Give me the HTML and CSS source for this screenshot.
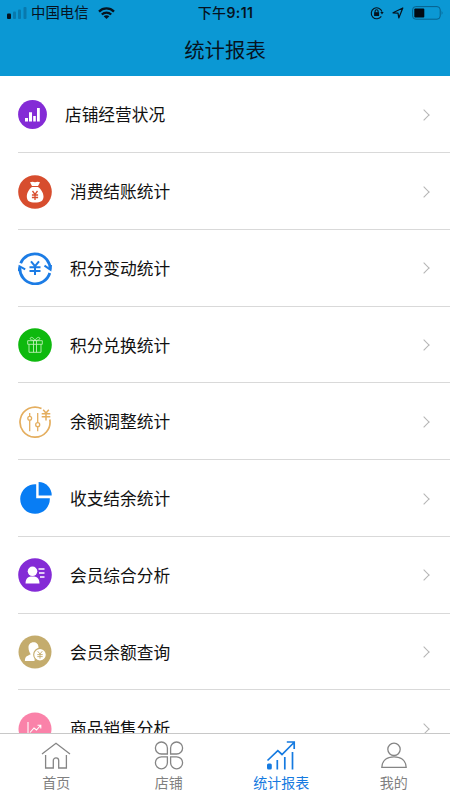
FILE: index.html
```html
<!DOCTYPE html>
<html lang="zh-CN">
<head>
  <meta charset="UTF-8" />
  <meta name="viewport" content="width=device-width, initial-scale=1.0" />
  <title>统计报表</title>
  <link rel="stylesheet" href="styles.css">
</head>
<body>

  <header class="header">
    <div class="status-bar">
      <div class="status-left">
        <svg class="signal" width="20" height="12" viewBox="0 0 20 12">
          <rect x="0" y="6.500" width="4" height="5.500" rx="1" fill="#06131f"/>
          <g fill="#0879ad">
            <rect x="6" y="4.500" width="3" height="7.500" rx="1"/>
            <rect x="11" y="2.500" width="3" height="9.500" rx="1"/>
            <rect x="16.500" y="0" width="3" height="12" rx="1"/>
          </g>
        </svg>
        <span class="carrier">中国电信</span>
        <svg class="wifi" width="17" height="12" viewBox="0 0 17 12" fill="none" stroke="#06131f" stroke-width="2.3">
          <path d="M1 4.600C5.200.4 11.800.4 16 4.600"/>
          <path d="M3.800 7.500C6.500 4.900 10.500 4.900 13.200 7.500"/>
          <path d="M8.500 12L5.700 9.200C7.300 7.900 9.700 7.900 11.300 9.200Z" fill="#06131f" stroke="none"/>
        </svg>
      </div>
      <div class="status-time">下午<b>9:11</b></div>
      <div class="status-right">
        <svg width="14" height="14" viewBox="0 0 14 14" fill="none" stroke="#06131f" stroke-width="1.100">
          <path d="M11.300 10.400A5.500 5.500 0 1 1 12 5.600"/>
          <path d="M10.300 5.900H13.700L12 8.400Z" fill="#06131f" stroke="none"/>
          <rect x="4.100" y="6.200" width="5" height="3.800" fill="#06131f" stroke="none"/>
          <path d="M5.100 6.500V5.300a1.500 1.500 0 0 1 3 0V6.500"/>
        </svg>
        <svg width="12" height="12" viewBox="0 0 12 12" fill="none" stroke="#06131f" stroke-width="1.200" stroke-linejoin="round">
          <path d="M1 5.800L10.800 1L6.800 11L6 6.200Z"/>
        </svg>
        <svg width="32" height="14" viewBox="0 0 32 14">
          <rect x=".6" y=".6" width="27.600" height="12.600" rx="3.200" fill="none" stroke="#07618d"/>
          <rect x="2.300" y="2.500" width="10" height="9" rx="1" fill="#020a14"/>
          <path d="M29.700 4.800q1.600 2.100 0 4.200Z" fill="#07618d"/>
        </svg>
      </div>
    </div>
    <h1 class="title">统计报表</h1>
  </header>

  <main class="list">
    <div class="row">
      <svg class="icon icon-small" viewBox="0 0 29 29">
        <circle cx="14.500" cy="14.500" r="14.400" fill="#842bd6"/>
        <path d="M7 18h3v3.500H7zM11 12.200h3v9.300h-3zM15.200 16h2.600v5.500h-2.600zM19 8h2.800v13.500H19z" fill="#fff"/>
      </svg>
      <span class="label">店铺经营状况</span>
      <i class="arrow"></i>
    </div>
    <div class="row">
      <svg class="icon" viewBox="0 0 34 34">
        <circle cx="17" cy="17" r="16.800" fill="#d74d2e"/>
        <path d="M12 7.200Q14.500 6.400 17 7.200Q19.500 6.400 22 7.200L20 11H14ZM14 12H20C23 14 25.500 18 25.500 21.500C25.500 26 22.500 27.600 17 27.600S8.800 26 8.800 21.500C8.800 18 11 14 14 12Z" fill="#fff"/>
        <path d="M14.500 16L17 19.300L19.500 16M17 19.300V25M13.900 20H20.100M13.900 22.500H20.100" fill="none" stroke="#d74d2e" stroke-width="1.300"/>
      </svg>
      <span class="label">消费结账统计</span>
      <i class="arrow"></i>
    </div>
    <div class="row">
      <svg class="icon" viewBox="0 0 34 34" fill="none" stroke="#1c7ce5">
        <path d="M2.700 12.200A15.300 15.300 0 0 1 32.100 18.500M31.800 22A15.300 15.300 0 0 1 1.900 16.500" stroke-width="2.800"/>
        <path d="M26.500 14.700L32.500 18.800L33 14M7.200 18.300L1.500 15.200L.8 20" stroke-width="2"/>
        <path d="M13 10.300L17 15.200L21 10.300M17 15.200V24M11.500 16.200H22.500M11.500 20H22.500" stroke-width="2"/>
      </svg>
      <span class="label">积分变动统计</span>
      <i class="arrow"></i>
    </div>
    <div class="row">
      <svg class="icon" viewBox="0 0 34 34">
        <circle cx="17" cy="17" r="16.800" fill="#0eb90e"/>
        <path d="M9.700 12.700H24.300V16.300H9.700ZM11 16.300V24.300H23V16.300M15.500 12.700V24.300M18.500 12.700V24.300M17 12.500C13 12.500 11.500 11 12.500 9.800C14 8.500 16 10.500 17 12.500C18 10.500 20 8.500 21.500 9.800C22.500 11 21 12.500 17 12.500" fill="none" stroke="#bdf1b5" stroke-width=".9"/>
      </svg>
      <span class="label">积分兑换统计</span>
      <i class="arrow"></i>
    </div>
    <div class="row">
      <svg class="icon" viewBox="0 0 34 34" fill="none" stroke="#e4ae5f" stroke-width="1.300">
        <path d="M23.500 3.600A15 15 0 1 0 31.800 14.500" stroke-width="1.700"/>
        <path d="M11.700 8V11.200M11.700 15.200V26.200M19.700 8V17.500M19.700 21.800V26.200"/>
        <circle cx="11.700" cy="13.200" r="1.900"/>
        <circle cx="19.700" cy="19.700" r="2"/>
        <path d="M25.200 4.800L28 8L30.800 4.800M28 8V15.500M23.700 8.700H32.300M23.700 11.700H32.300" stroke-width="1.500"/>
      </svg>
      <span class="label">余额调整统计</span>
      <i class="arrow"></i>
    </div>
    <div class="row">
      <svg class="icon" viewBox="0 0 34 34" fill="#087df4">
        <path d="M18.200 2.300A14.800 14.800 0 1 0 31.800 16.200H18.200Z"/>
        <path d="M20.600 0A13.300 13.300 0 0 1 33.700 13.500H20.600Z"/>
      </svg>
      <span class="label">收支结余统计</span>
      <i class="arrow"></i>
    </div>
    <div class="row">
      <svg class="icon" viewBox="0 0 34 34">
        <circle cx="17" cy="17" r="16.800" fill="#842bd6"/>
        <circle cx="14.500" cy="13.300" r="4.800" fill="#fff"/>
        <path d="M7.500 25.500C7.500 20.300 10.200 18.500 14.500 18.500S21.500 20.300 21.500 25.500Z" fill="#fff"/>
        <path d="M20.500 11H26.500M21 15H26.500M22 19H26.500" stroke="#fff" stroke-width="1.500"/>
      </svg>
      <span class="label">会员综合分析</span>
      <i class="arrow"></i>
    </div>
    <div class="row">
      <svg class="icon" viewBox="0 0 34 34">
        <circle cx="17" cy="17" r="16.500" fill="#c4ac6d"/>
        <path d="M15.500 7.300c3 0 5 2 5 5.100c0 2.500-1.200 4.300-3.300 5.600l-.7 8H6.900C6.900 21.500 9 21 12.800 19.300C11.500 17.500 10.500 15.500 10.500 12.500c0-3.100 2-5.200 5-5.200Z" fill="#fff"/>
        <circle cx="22" cy="19.700" r="6.300" fill="#fff" stroke="#c4ac6d" stroke-width="1.100"/>
        <path d="M19.700 16.200L22 19L24.300 16.200M22 19V23.700M19.300 19.600H24.700M19.300 21.600H24.700" fill="none" stroke="#c4ac6d" stroke-width=".9"/>
      </svg>
      <span class="label">会员余额查询</span>
      <i class="arrow"></i>
    </div>
    <div class="row">
      <svg class="icon" viewBox="0 0 34 34">
        <circle cx="17" cy="17" r="16.500" fill="#fa82a9"/>
        <path d="M10 10V23.500H25M12 20.500L16 16L18.500 18L22.500 13.500M19.500 13.200H22.800V16.500" fill="none" stroke="#fff" stroke-width="1.100"/>
      </svg>
      <span class="label">商品销售分析</span>
      <i class="arrow"></i>
    </div>
  </main>

  <nav class="tab-bar">
    <a class="tab">
      <svg width="30" height="30" viewBox="0 0 30 30" fill="none" stroke="#858585" stroke-width="1.300">
        <path d="M1 14L15 3.200L29 14M4.600 15V28H12.300V20.500a2.700 2.700 0 0 1 5.400 0V28H25.400V15"/>
      </svg>
      <span>首页</span>
    </a>
    <a class="tab">
      <svg width="30" height="30" viewBox="0 0 30 30" fill="none" stroke="#858585" stroke-width="1.300">
        <path d="M13.400 14H7.400a6 6 0 1 1 6-6ZM16.600 14V8a6 6 0 1 1 6 6ZM13.400 16.800H7.400a6 6 0 1 0 6 6ZM16.600 16.800V22.800a6 6 0 1 0 6-6Z"/>
      </svg>
      <span>店铺</span>
    </a>
    <a class="tab active">
      <svg width="30" height="30" viewBox="0 0 30 30" fill="none" stroke="#157ae0" stroke-width="1.700">
        <path d="M1.500 20.500L11.800 10.700L16 14.500L28 2.500M20.800 2H28.200V9"/>
        <path d="M11.300 20V29.500M18.800 17V29.500M26.500 12V29.500"/>
        <rect x="1" y="23.500" width="4.800" height="6" rx="1.500" fill="#157ae0" stroke="none"/>
      </svg>
      <span>统计报表</span>
    </a>
    <a class="tab">
      <svg width="30" height="30" viewBox="0 0 30 30" fill="none" stroke="#858585" stroke-width="1.300">
        <circle cx="15" cy="9.300" r="6.200"/>
        <path d="M2.800 27.400C3 20.500 8 16.800 15 16.800S27 20.500 27.200 27.400Z"/>
      </svg>
      <span>我的</span>
    </a>
  </nav>

</body>
</html>
```

FILE: styles.css
```css
* {
  box-sizing: border-box;
}
body {
  margin: 0;
  height: 800px;
  display: flex;
  flex-direction: column;
  overflow: hidden;
  background: #fff;
  color: #111;
  font-family: "Liberation Sans", "Noto Sans CJK SC", sans-serif;
}
svg {
  display: block;
  flex-shrink: 0;
}
.header {
  height: 76.4px;
  flex-shrink: 0;
  background: #0b98d4;
  color: #06131f;
}
.status-bar {
  height: 25px;
  padding: 0 6px 0 7px;
  display: grid;
  grid-template-columns: 1fr auto 1fr;
  align-items: center;
}
.status-left, .status-right {
  display: flex;
  align-items: center;
}
.carrier {
  margin-left: 4px;
  padding-top: 2px;
  font-size: 14.4px;
  line-height: 23px;
}
.wifi {
  margin-left: 9px;
}
.status-time {
  font-family: Inter, "Noto Sans CJK SC", sans-serif;
  font-size: 14px;
  font-weight: 500;
  line-height: 25px;
  letter-spacing: 0.4px;
}
.status-time b {
  font-weight: 600;
}
.status-right {
  justify-content: flex-end;
  gap: 8px;
}
.title {
  margin: 0;
  padding-top: 2px;
  font-size: 20.4px;
  font-weight: 400;
  line-height: 49px;
  text-align: center;
}
.list {
  flex: 1;
  min-height: 0;
  padding-left: 18px;
  overflow: hidden;
}
.row {
  height: 76.75px;
  padding: 1px 22px 0 0;
  display: flex;
  align-items: center;
  border-bottom: 1px solid #d9d9d9;
}
.icon {
  width: 34px;
  height: 34px;
}
.icon-small {
  width: 29px;
  height: 29px;
}
.label {
  flex: 1;
  margin-left: 18px;
  padding-top: 3px;
  font-size: 16.7px;
  line-height: 24px;
}
.arrow {
  width: 8px;
  height: 8px;
  border-top: 1px solid #b5b5b5;
  border-right: 1px solid #b5b5b5;
  transform: rotate(45deg);
}
.tab-bar {
  height: 67px;
  flex-shrink: 0;
  padding-top: 6px;
  display: grid;
  grid-template-columns: repeat(4, 1fr);
  border-top: 1px solid #c8c8c8;
}
.tab {
  display: flex;
  flex-direction: column;
  align-items: center;
  color: #808080;
  font-size: 14px;
  line-height: 27px;
}
.active {
  color: #157ae0;
}
```
